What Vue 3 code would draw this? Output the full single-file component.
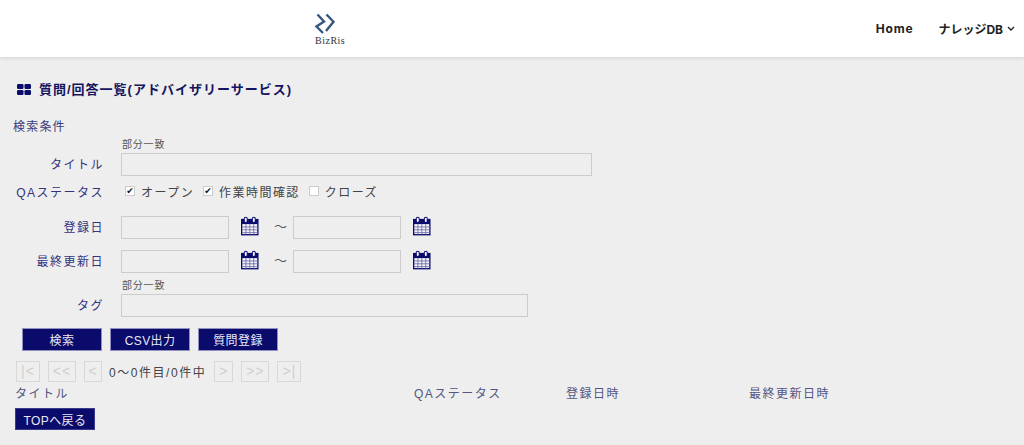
<script setup>
const dateRows = ['登録日', '最終更新日']
const firstPager = [
  { t: '|<', w: 24 },
  { t: '<<', w: 28 },
  { t: '<', w: 18 },
]
const lastPager = [
  { t: '>', w: 19 },
  { t: '>>', w: 28 },
  { t: '>|', w: 24 },
]
const statuses = [
  { t: 'オープン', on: true },
  { t: '作業時間確認', on: true },
  { t: 'クローズ', on: false },
]
</script>

<template>
  <div class="page">
    <header class="head">
      <div class="logo">
        <svg width="24" height="21" viewBox="0 0 24 21">
          <path d="M3.5 1.5 L10 8.5 L2.5 13.5 L9 20 M12.5 1.5 L19.5 8.7 L12 18" fill="none" stroke="#34567f" stroke-width="2.4" />
        </svg>
        <span class="logo-text">BizRis</span>
      </div>
      <nav class="nav">
        <span class="nav-home">Home</span>
        <span class="nav-db">ナレッジDB
          <svg width="8" height="6" viewBox="0 0 8 6"><path d="M1 1 L4 4 L7 1" fill="none" stroke="#222" stroke-width="1.4" /></svg>
        </span>
      </nav>
    </header>

    <main class="main">
      <h1 class="title">
        <svg class="grid-icon" width="14" height="11" viewBox="0 0 14 11">
          <rect x="0" y="0" width="6.5" height="5" rx="1.2" />
          <rect x="7.5" y="0" width="6.5" height="5" rx="1.2" />
          <rect x="0" y="6" width="6.5" height="5" rx="1.2" />
          <rect x="7.5" y="6" width="6.5" height="5" rx="1.2" />
        </svg>
        質問/回答一覧(アドバイザリーサービス)
      </h1>

      <div class="cond">検索条件</div>

      <div class="hint">部分一致</div>
      <div class="row tight">
        <label class="lab">タイトル</label>
        <input class="field wide" />
      </div>

      <div class="row status">
        <label class="lab">QAステータス</label>
        <div class="checks">
          <span v-for="s in statuses" :key="s.t" class="chk">
            <i class="box">{{ s.on ? '✔' : '' }}</i>{{ s.t }}
          </span>
        </div>
      </div>

      <div v-for="d in dateRows" :key="d" class="row date">
        <label class="lab">{{ d }}</label>
        <template v-for="n in 2" :key="n">
          <input class="field short" />
          <svg class="cal" width="18" height="20" viewBox="0 0 19 20">
            <rect x="0.7" y="3.2" width="17.1" height="16" fill="#f4f4fa" stroke="#0b0b6b" stroke-width="1.4" />
            <rect x="0.7" y="3.2" width="17.1" height="4.8" fill="#0b0b6b" />
            <path d="M1 11H18M1 14H18M1 17H18M5.2 8V19M9.3 8V19M13.4 8V19" stroke="#6a6aa8" stroke-width="0.9" fill="none" />
            <rect x="3.4" y="0.7" width="3.2" height="5.6" rx="1.6" fill="#f4f4fa" stroke="#0b0b6b" stroke-width="1.1" />
            <rect x="11.9" y="0.7" width="3.2" height="5.6" rx="1.6" fill="#f4f4fa" stroke="#0b0b6b" stroke-width="1.1" />
          </svg>
          <span v-if="n === 1" class="tilde">～</span>
        </template>
      </div>

      <div class="hint tag-hint">部分一致</div>
      <div class="row tight">
        <label class="lab">タグ</label>
        <input class="field tag" />
      </div>

      <div class="actions">
        <button class="btn">検索</button>
        <button class="btn">CSV出力</button>
        <button class="btn">質問登録</button>
      </div>

      <div class="pager">
        <button v-for="p in firstPager" :key="p.t" class="pg" :style="{ width: p.w + 'px' }">{{ p.t }}</button>
        <span class="count">0～0件目/0件中</span>
        <button v-for="p in lastPager" :key="p.t" class="pg" :style="{ width: p.w + 'px' }">{{ p.t }}</button>
      </div>

      <div class="thead">
        <span>タイトル</span>
        <span>QAステータス</span>
        <span>登録日時</span>
        <span>最終更新日時</span>
      </div>

      <button class="btn top">TOPへ戻る</button>
    </main>
  </div>
</template>

<style>
html, body { margin: 0; background: #eee; }
</style>

<style scoped>
.page {
  height: 445px;
  overflow: hidden;
  background: #eee;
  font-family: "Liberation Sans", "Noto Sans CJK JP", sans-serif;
  color: #3a3a3a;
  font-size: 13px;
}
.head {
  height: 57px;
  background: #fff;
  box-shadow: 0 1px 4px rgba(0,0,0,.12);
  display: flex;
  align-items: center;
  justify-content: space-between;
  padding-left: 314px;
  padding-right: 9px;
  box-sizing: border-box;
}
.logo { display: flex; flex-direction: column; align-items: flex-start; margin-top: 2px; }
.logo svg { display: block; margin-bottom: 1px; }
.logo-text {
  font-family: "Liberation Serif", serif;
  font-size: 10px;
  line-height: 11px;
  color: #333;
  letter-spacing: .5px;
  margin-left: 1px;
}
.nav { display: flex; align-items: center; gap: 25px; font-weight: 700; font-size: 12px; color: #222; font-family: Inter, "Noto Sans CJK JP", sans-serif; }
.nav-home { letter-spacing: .8px; }
.nav-db { display: flex; align-items: center; gap: 4px; }
.main { padding: 0 0 0 13px; }
.title {
  margin: 24px 0 0 4px;
  font-size: 13px;
  line-height: 17px;
  font-weight: 700;
  color: #14145f;
  letter-spacing: 1px;
  display: flex;
  align-items: center;
  gap: 8px;
}
.grid-icon { fill: #0b0b6b; }
.cond { margin-top: 21px; font-size: 12px; line-height: 16px; color: #3b3b7a; letter-spacing: 1.2px; }
.hint { margin: 3px 0 0 109px; font-size: 10px; line-height: 13px; color: #555; letter-spacing: .8px; }
.row { display: flex; align-items: center; }
.tight { margin-top: 2px; }
.lab { width: 91px; padding-bottom: 2px; text-align: right; font-size: 12px; color: #34347c; letter-spacing: 1.5px; flex: none; margin-right: 17px; }
.field {
  box-sizing: border-box;
  height: 23px;
  background: #eee;
  border: 1px solid #ccc;
  padding: 0;
  margin: 0;
  flex: none;
}
.wide { width: 471px; }
.short { width: 108px; }
.tag { width: 407px; }
.status { margin-top: 7px; height: 18px; }
.checks { display: flex; gap: 9px; margin-left: 4px; padding-bottom: 2px; }
.chk { display: flex; align-items: center; gap: 6px; font-size: 12px; letter-spacing: 1.45px; color: #444; }
.box {
  box-sizing: border-box;
  width: 10px; height: 10px;
  border: 1px solid #ccc;
  background: #fff;
  display: inline-flex;
  align-items: center;
  justify-content: center;
  font-family: "DejaVu Sans", sans-serif;
  font-style: normal;
  font-weight: 700;
  font-size: 9px;
  line-height: 1;
  color: #111;
  letter-spacing: 0;
}
.date { height: 23px; margin-top: 11px; }
.status + .date { margin-top: 15px; }
.cal { margin: 0 0 4px 12px; flex: none; }
.tilde { width: 34px; padding: 0 0 4px 9px; text-align: center; font-size: 13px; color: #555; flex: none; box-sizing: border-box; }
.tag-hint { margin-top: 6px; }
.actions { display: flex; gap: 8px; margin: 11px 0 0 9px; }
.btn {
  width: 80px;
  height: 23px;
  background: #0b0b6b;
  border: 1px solid #8f8fc0;
  color: #e8e8f5;
  font-family: inherit;
  font-size: 12px;
  padding: 0;
  letter-spacing: .4px;
}
.pager { display: flex; align-items: center; gap: 8px; margin: 9px 0 0 3px; height: 22px; }
.pg {
  height: 21px;
  padding: 0;
  box-sizing: border-box;
  background: #eee;
  border: 1px solid #d8d8d8;
  color: #cfcfcf;
  font-size: 14px;
  letter-spacing: 1px;
  font-family: inherit;
}
.count { font-size: 12px; letter-spacing: 1.55px; color: #444; margin-left: -1px; }
.thead { height: 17px; margin: 4px 0 0 2px; font-size: 12px; letter-spacing: 1.5px; color: #55557f; display: grid; grid-template-columns: 399px 152px 183px 1fr; line-height: 17px; }
.top { display: block; height: 22px; margin: 5px 0 0 2px; border-color: #3a3a8a; }
</style>
